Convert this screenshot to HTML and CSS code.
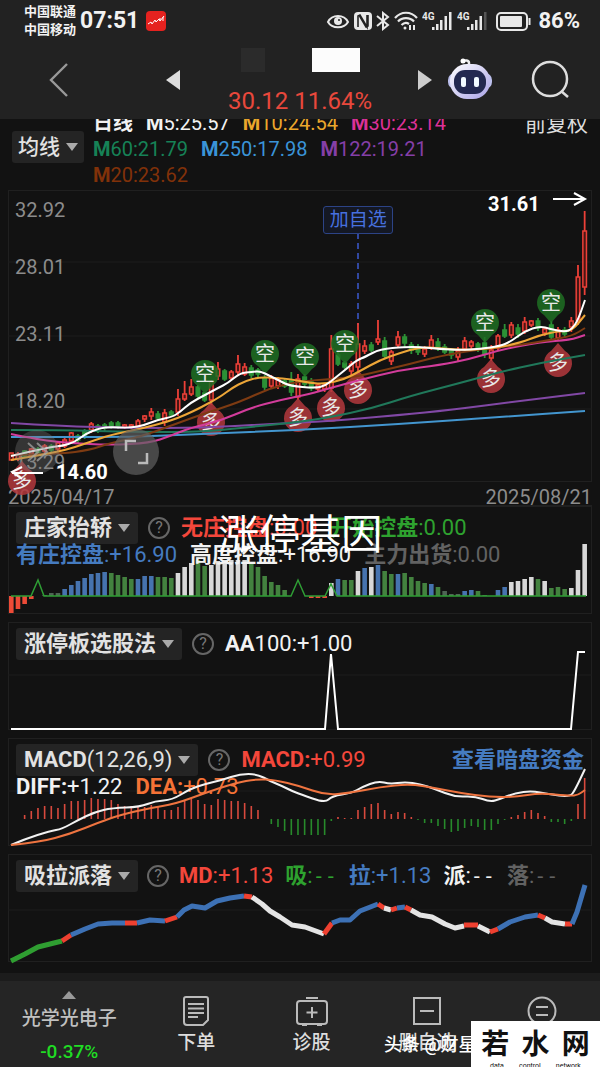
FILE: index.html
```html
<!DOCTYPE html>
<html lang="zh-CN">
<head>
<meta charset="utf-8">
<meta name="viewport" content="width=device-width, initial-scale=1">
<title>行情</title>
<link rel="stylesheet" href="styles.css">
</head>
<body>
<div class="status">
  <div class="carriers"><span>中国联通</span><span>中国移动</span></div>
  <span class="clock">07:51</span>
  <svg class="app-dot" viewBox="0 0 20 20" width="20" height="20"><rect width="20" height="20" rx="4" fill="#e5221f"/><path d="M2 13l3-2 1 2 3-4 1 2 3-3 1 2 4-5M14 7v3M17 6v4" fill="none" stroke="#fff" stroke-width="1"/></svg>
  <div class="status-icons">
    <svg viewBox="0 0 24 20" width="24" height="20" fill="none" stroke="#e8e8e8" stroke-width="2"><path d="M2 11C6 3 18 3 22 11C18 18 6 18 2 11Z"/><circle cx="12" cy="10" r="4" fill="#e8e8e8" stroke="none"/><circle cx="13" cy="9" r="1" fill="#222" stroke="none"/></svg>
    <svg viewBox="0 0 18 20" width="18" height="20"><rect x="0" y="1" width="18" height="18" rx="4" fill="#e8e8e8"/><path d="M4 16V5l2-1 7 12V4M14 4v11l-2 1L5 4" fill="none" stroke="#222" stroke-width="1.6"/></svg>
    <svg viewBox="0 0 14 20" width="14" height="20" fill="none" stroke="#e8e8e8" stroke-width="2"><path d="M1 5l11 9-5 4V2l5 4-11 9"/></svg>
    <svg viewBox="0 0 24 20" width="24" height="20" fill="none" stroke="#e8e8e8" stroke-width="2.2"><path d="M1 7C7 0 17 0 23 7M4 10.500C8 6 16 6 20 10.500M7.500 14C10 11.500 13 11.500 15 13"/><circle cx="11" cy="17" r="1.500" fill="#e8e8e8" stroke="none"/><path d="M16 14v5M20 14v5" stroke-width="2"/></svg>
    <svg viewBox="0 0 31 22" width="31" height="22" fill="#e8e8e8"><text x="0" y="10" class="net">4G</text><path d="M10 17h2.500v3h-2.500zM14 14h2.500v6h-2.500zM18 10h2.500v10h-2.500zM22.500 6h2.500v14h-2.500zM27 2h2.500v18h-2.500z"/></svg>
    <svg viewBox="0 0 31 22" width="31" height="22" fill="#e8e8e8"><text x="0" y="10" class="net">4G</text><path d="M10 17h2.500v3h-2.500zM14 14h2.500v6h-2.500zM18 10h2.500v10h-2.500zM22.500 6h2.500v14h-2.500z"/><path d="M27 2h2.500v18h-2.500z" fill="#555"/></svg>
    <svg class="cell" viewBox="0 0 36 20" width="36" height="20"><rect x="1" y="2" width="30" height="17" rx="4" fill="none" stroke="#e8e8e8" stroke-width="2"/><rect x="4" y="5" width="22" height="11" rx="1" fill="#e8e8e8"/><path d="M33.500 7v7" stroke="#e8e8e8" stroke-width="2"/></svg>
    <span class="battery">86%</span>
  </div>
</div>

<header class="topbar">
  <div class="side side-left">
    <button class="icon-btn" aria-label="返回"><svg viewBox="0 0 22 36" width="22" height="36"><path d="M19 2L3 18l16 16" fill="none" stroke="#999" stroke-width="2.400"/></svg></button>
    <button class="icon-btn" aria-label="上一只"><svg viewBox="0 0 14 20" width="14" height="20"><path d="M14 0v20L0 10z" fill="#ddd"/></svg></button>
  </div>
  <div class="quote">
    <div class="name"><span class="block dark"></span><span class="block light"></span></div>
    <div class="price">30.12 11.64%</div>
  </div>
  <div class="side side-right">
    <button class="icon-btn" aria-label="下一只"><svg viewBox="0 0 14 20" width="14" height="20"><path d="M0 0v20l14-10z" fill="#ccc"/></svg></button>
    <button class="icon-btn robot" aria-label="智能助手"><svg viewBox="0 0 46 44" width="46" height="44"><defs><linearGradient id="shell" x1="0" y1="0" x2="1" y2="1"><stop offset="0" stop-color="#fff"/><stop offset="1" stop-color="#aaa4e8"/></linearGradient></defs><path d="M22 8V5c0-3-4-3-6-2" fill="none" stroke="#eee" stroke-width="2.500"/><circle cx="16" cy="3" r="2.500" fill="#fff"/><rect x="1" y="15" width="44" height="16" rx="7" fill="#bcc0ed"/><rect x="3" y="6" width="40" height="35" rx="17" fill="url(#shell)"/><rect x="7" y="12" width="32" height="24" rx="11" fill="#232950"/><rect x="14" y="19" width="5" height="10" rx="2" fill="#f2fbff"/><rect x="27" y="19" width="5" height="10" rx="2" fill="#f2fbff"/></svg></button>
    <button class="icon-btn" aria-label="搜索"><svg viewBox="0 0 40 40" width="40" height="40" fill="none" stroke="#ddd" stroke-width="2.500"><circle cx="20" cy="19" r="17"/><path d="M31 31l7 6"/></svg></button>
  </div>
</header>

<main class="content">
  <section class="legend">
    <button class="pick pick-ma">均线 <i class="caret"></i></button>
    <div class="ma-rows">
      <div class="row ma"><b>日线</b><span><b>M</b>5:25.57</span><span class="c-yellow"><b>M</b>10:24.54</span><span class="c-pink"><b>M</b>30:23.14</span></div>
      <div class="row ma"><span class="c-teal"><b>M</b>60:21.79</span><span class="c-sky"><b>M</b>250:17.98</span><span class="c-purple"><b>M</b>122:19.21</span></div>
      <div class="row ma"><span class="c-brown"><b>M</b>20:23.62</span></div>
    </div>
    <span class="adjust">前复权</span>
  </section>

  <section class="kline">
    <svg id="kline" class="plot" viewBox="8 190 584 292">
      <path class="grid" d="M8 262H592M8 336H592M8 409H592"/>
      <g class="axis"><text x="15" y="217">32.92</text><text x="15" y="274">28.01</text><text x="15" y="341">23.11</text><text x="15" y="408">18.20</text><text x="15" y="469">13.29</text></g>
      <path d="M358 233V325" stroke="#3c5bd0" stroke-width="1.500" stroke-dasharray="6 4"/>
      <g id="candles"></g>
      <g id="signals"></g>
      <g id="averages" class="line"></g>
      <circle cx="37" cy="452" r="22" fill="#777" opacity=".35"/>
      <path d="M28 443l10 9-10 9M37 443l10 9-10 9" fill="none" stroke="#aaa" stroke-width="2" opacity=".7"/>
      <path d="M553 199H585M574 193l11 6-11 6M43 473H12M22 467l-10 5 10 7" fill="none" stroke="#fff" stroke-width="2"/>
      <text class="mark" x="488" y="211">31.61</text><text class="mark" x="56" y="479">14.60</text>
    </svg>
    <button class="watch">加自选</button>
    <button class="expand" aria-label="全屏"><svg viewBox="0 0 46 46" width="46" height="46" fill="none" stroke="#bbb" stroke-width="2.500"><path d="M13 22V12h10M25 34h9V24"/></svg></button>
  </section>
  <div class="dates"><span>2025/04/17</span><span>2025/08/21</span></div>

  <section class="panel">
    <svg class="plot" viewBox="8 506 584 108"><g id="control"></g><path d="M11 596H31L38 580L44 596H291L298 580L305 596H325L331 584L337 596H586" fill="none" stroke="#2f9e35" stroke-width="1.500"/></svg>
    <div class="head">
      <div class="row"><button class="pick">庄家抬轿 <i class="caret"></i></button><button class="help">?</button><span class="c-red"><b>无庄控盘</b>:0.00</span><span class="c-green"><b>开始控盘</b>:0.00</span></div>
      <div class="row values"><span class="c-blue"><b>有庄控盘</b>:+16.90</span><span><b>高度控盘</b>:+16.90</span><span class="c-gray"><b>主力出货</b>:0.00</span></div>
    </div>
    <div class="caption">涨停基因</div>
  </section>

  <section class="panel">
    <svg class="plot" viewBox="8 622 584 108"><path class="grid" d="M8 675H592"/><path d="M11 729H325L331 654L338 729H571L578 652H585" fill="none" stroke="#fff" stroke-width="2"/></svg>
    <div class="head"><div class="row"><button class="pick">涨停板选股法 <i class="caret"></i></button><button class="help">?</button><span><b>AA</b>100:+1.00</span></div></div>
  </section>

  <section class="panel">
    <svg class="plot" viewBox="8 738 584 108"><path class="grid" d="M8 791H592"/><g id="macd"></g></svg>
    <div class="head">
      <div class="row"><button class="pick"><span><b>MACD</b>(12,26,9)</span> <i class="caret"></i></button><button class="help">?</button><span class="c-red"><b>MACD:</b>+0.99</span><a class="more" href="#funds">查看暗盘资金</a></div>
      <div class="row values"><span><b>DIFF:</b>+1.22</span><span class="c-orange"><b>DEA:</b>+0.73</span></div>
    </div>
    <svg class="plot line front" viewBox="8 738 584 108"><g id="macd-lines"></g></svg>
  </section>

  <section class="panel">
    <svg class="plot" viewBox="8 854 584 108"><path class="grid" d="M8 910H592"/><g id="trend" fill="none" stroke-width="5" stroke-linejoin="round"></g></svg>
    <div class="head"><div class="row tight"><button class="pick">吸拉派落 <i class="caret"></i></button><button class="help">?</button><span class="c-red"><b>MD</b>:+1.13</span><span class="c-green"><b>吸</b>:<span class="dash">--</span></span><span class="c-blue"><b>拉</b>:+1.13</span><span><b>派</b>:<span class="dash">--</span></span><span class="c-gray"><b>落</b>:<span class="dash">--</span></span></div></div>
  </section>
</main>

<nav class="tabbar">
  <button class="tab sector"><svg viewBox="0 0 14 8" width="14" height="8"><path d="M7 0l7 8H0z" fill="#999"/></svg><span>光学光电子</span><strong>-0.37%</strong></button>
  <button class="tab"><svg viewBox="0 0 32 32" width="32" height="32"><path d="M6 2H26q2 0 2 2V25l-5 5H7q-3 0-3-3V4q0-2 2-2zM8 9h16M8 13.500h16M8 18h16M8 22h10"/></svg><span>下单</span></button>
  <button class="tab"><svg viewBox="0 0 32 32" width="32" height="32"><rect x="1" y="6" width="30" height="23" rx="3"/><path d="M10 3h12M16 12v11M10.500 17.500h11M6 30h5M21 30h5"/></svg><span>诊股</span></button>
  <button class="tab"><svg viewBox="0 0 32 32" width="32" height="32"><path d="M3 3h26v26H3zM9 16h14"/></svg><span>删自选</span></button>
  <button class="tab"><svg viewBox="0 0 32 32" width="32" height="32"><circle cx="16" cy="16" r="13.500"/><path d="M10 12h12M10 20h12"/></svg><span>更多</span></button>
  <div class="credit">头条 @财星天下</div>
  <div class="stamp"><div class="stamp-name"><span>若</span><span>水</span><span>网</span></div><div class="stamp-sub"><span>data</span><span>control</span><span>network</span></div></div>
</nav>
<script src="chart.js"></script>
</body>
</html>
```
FILE: styles.css
```css
* { box-sizing: border-box; }
body { margin: 0; background: #131313; color: #f2f2f2; font: 22px/26px Roboto, "Noto Sans CJK SC", sans-serif; overflow-x: hidden; }
button { border: 0; padding: 0; background: none; color: inherit; font: inherit; }
svg { display: block; flex: none; }
b { font-weight: 700; }

.status { display: flex; align-items: center; height: 41px; padding: 0 20px 0 24px; background: #222; }
.carriers { display: flex; flex-direction: column; font-size: 13px; line-height: 18px; font-weight: 700; }
.clock { margin-left: 4px; font-size: 23px; font-weight: 700; }
.app-dot { margin-left: 7px; }
.status-icons { display: flex; align-items: center; gap: 4px; margin-left: auto; }
.net { font: 700 10px Roboto, sans-serif; }
.cell { margin-left: 4px; }
.battery { margin-left: 2px; font-size: 22px; font-weight: 700; }

.topbar { display: grid; grid-template-columns: 1fr 160px 1fr; height: 78px; background: #222; }
.side { display: flex; align-items: center; }
.side-left { justify-content: space-between; padding: 0 40px 0 48px; }
.side-right { padding: 0 30px 0 38px; gap: 15px; }
.robot { margin-right: auto; }
.quote { display: flex; flex-direction: column; align-items: center; padding-top: 7px; gap: 16px; }
.name { display: flex; gap: 47px; }
.block { height: 24px; }
.dark { width: 24px; background: #2b2b2b; }
.light { width: 48px; background: #fcfcfc; }
.price { color: #e8483c; font-size: 24px; white-space: nowrap; }

.content { padding: 0 8px 11px; background: #121212; }
.legend { display: flex; align-items: flex-end; gap: 9px; height: 71px; padding: 0 4px 2px; overflow: hidden; }
.pick { display: flex; align-items: center; gap: 6px; height: 32px; padding: 0 8px; background: #242424; border-radius: 3px; color: #e2e2e2; font-weight: 700; white-space: nowrap; }
.pick span { font-weight: 400; }
.pick-ma { align-self: center; margin-bottom: 14px; padding: 0 6px; font-size: 21px; font-weight: 500; }
.caret { border: 6px solid transparent; border-top: 8px solid #aaa; border-bottom: 0; }
.ma-rows { flex: 1; font-size: 20px; }
.row { display: flex; align-items: center; gap: 13px; white-space: nowrap; }
.tight { gap: 12px; }
.adjust { align-self: flex-start; margin-top: -8px; font-size: 21px; color: #ddd; }

.kline, .panel { position: relative; display: grid; box-shadow: inset 0 0 0 1px #202020; }
.plot { width: 100%; height: auto; grid-area: 1 / 1; overflow: visible; }
.grid { stroke: #1c1c1c; fill: none; }
.axis { font-size: 20px; fill: #8c8c8c; }
.mark { font-size: 20px; font-weight: 700; fill: #fff; }
.line { fill: none; stroke-width: 2; stroke-linejoin: round; }
.signal { font-size: 20px; fill: #e8e8e8; text-anchor: middle; }
.watch { position: absolute; left: 54%; top: 16px; width: 70px; height: 28px; border: 1px solid #2c4386; border-radius: 3px; color: #4770df; background: #141824; font-size: 19px; }
.expand { position: absolute; left: 18%; top: 239px; border-radius: 50%; background: rgb(95 95 95 / .7); }
.dates { display: flex; justify-content: space-between; height: 24px; line-height: 30px; color: #8c8c8c; font-size: 20px; border-bottom: 1px solid #202020; }
.panel + .panel { margin-top: 8px; }
.head { grid-area: 1 / 1; padding: 6px 8px 0; z-index: 1; }
.front { z-index: 2; }
.values { line-height: 22px; }
.help { width: 22px; height: 22px; margin: 0 -2px 0 -3px; border: 2px solid #666; border-radius: 50%; color: #777; font-size: 16px; line-height: 18px; }
.more { margin-left: auto; color: #457bc0; font-weight: 700; text-decoration: none; }
.dash { font-family: "DejaVu Sans Mono", monospace; font-size: 20px; }
.caption { position: absolute; z-index: 3; left: 36%; top: 0; font-size: 41px; line-height: 58px; color: #fff; }

.c-yellow { color: #eba72c; } .c-pink { color: #dc3197; } .c-teal { color: #168257; }
.c-sky { color: #3a94d8; } .c-purple { color: #853fa8; } .c-brown { color: #813109; }
.c-red { color: #f4473b; } .c-green { color: #2ea22f; } .c-blue { color: #457bc0; }
.c-gray { color: #626262; } .c-orange { color: #f57236; }

.tabbar { position: relative; display: grid; grid-template-columns: 6fr 5fr 5fr 5fr 5fr; height: 94px; border-top: 8px solid #1c1c1c; background: #252525; overflow: hidden; }
.tab { display: flex; flex-direction: column; align-items: center; justify-content: flex-start; gap: 3px; padding-top: 14px; color: #ddd; font-size: 19px; font-weight: 500; white-space: nowrap; }
.tab svg { fill: none; stroke: #bbb; stroke-width: 2; }
.sector { padding-top: 10px; gap: 7px; color: #c0c0c0; }
.tab.sector svg { stroke: none; }
.sector strong { color: #20dc24; font-weight: 500; }
.credit { position: absolute; left: 64%; bottom: 10px; font-size: 18px; line-height: 24px; color: #fff; font-weight: 500; white-space: nowrap; }
.stamp { position: absolute; right: 0; bottom: 0; width: 129px; height: 46px; padding: 7px 4px 0; background: #fff; color: #111; }
.stamp-name { display: flex; justify-content: space-around; font-size: 28px; line-height: 34px; font-weight: 700; }
.stamp-sub { display: flex; justify-content: space-evenly; font-size: 7px; line-height: 8px; }
```
FILE: chart.js
```js
const NS = "http://www.w3.org/2000/svg";
const X0 = 11.3, STEP = 6.667;
const xAt = i => X0 + i * STEP;

function add(parent, tag, attrs, text) {
  const el = document.createElementNS(NS, tag);
  for (const k in attrs) el.setAttribute(k, attrs[k]);
  if (text) el.textContent = text;
  parent.appendChild(el);
  return el;
}
const byId = id => document.getElementById(id);

// Smooth path through "x,y x,y ..." points.
function smooth(str) {
  const p = str.split(" ").map(s => s.split(",").map(Number));
  let d = `M${p[0]}`;
  for (let i = 1; i < p.length - 1; i++) {
    d += `Q${p[i]} ${(p[i][0] + p[i + 1][0]) / 2},${(p[i][1] + p[i + 1][1]) / 2}`;
  }
  return d + `L${p[p.length - 1]}`;
}

// Candles: colour, high, body top, body bottom, low.
const candles = `r 453 453 460 460|r 452 454 459 461|g 450 451 456 458|r 448 449 454 456|g 447 449 453 455|r 444 446 451 453|g 444 446 450 452|r 441 443 449 451
r 438 440 446 448|r 432 433 441 444|g 434 436 440 443|g 429 431 436 439|r 422 424 430 433|g 424 426 430 433|g 423 425 428 431|g 421 423 427 429|g 421 423 426 429|r 424 425 427 429
r 424 425 427 429|r 419 421 426 428|r 415 416 419 422|r 408 412 416 420|g 411 414 418 420|r 409 413 422 426|g 410 412 415 417|r 389 399 412 416|r 381 394 399 401|r 379 387 394 396
g 385 387 396 399|g 392 393 400 402|r 380 382 400 405|r 362 369 376 380|g 369 371 379 381|r 370 372 378 380|r 355 364 372 376|r 363 367 374 376|g 365 368 375 378|g 368 370 374 377
g 375 378 387 390|r 375 378 386 389|r 377 379 386 389|g 379 381 386 388|g 372 380 392 396|r 374 379 397 400|g 374 377 384 388|g 378 382 388 391|r 383 385 389 392|r 383 385 389 392
r 335 349 388 392|g 351 355 364 366|g 361 363 367 369|r 361 364 371 375|r 323 344 367 371|r 340 346 351 354|g 342 345 350 352|r 320 339 342 345|g 337 341 356 359|r 350 352 361 365
r 331 337 345 348|g 334 337 343 347|g 342 345 350 354|g 344 347 352 355|r 346 349 354 357|r 335 340 348 350|g 338 342 347 351|g 344 347 352 354|g 348 350 355 359|r 347 351 357 361
r 337 341 349 352|r 340 342 346 349|g 342 344 349 352|g 337 343 354 358|r 345 350 358 361|r 334 336 348 351|g 324 330 336 338|r 322 325 335 338|g 324 328 334 338|r 317 322 331 334
r 320 321 325 327|g 318 321 328 331|r 327 329 333 336|g 321 325 337 340|r 327 330 338 341|g 327 330 334 337|r 317 321 327 332|r 265 277 320 325|r 211 231 287 295`
  .split(/[|\n]/).map(s => s.split(" "));
candles.forEach(([c, high, top, bottom, low], i) => {
  const color = c === "r" ? "#ec4038" : "#2c9136";
  const x = xAt(i), g = byId("candles");
  add(g, "path", { d: `M${x} ${high}V${top}M${x} ${bottom}V${low}`, stroke: color, "stroke-width": 1.8 });
  add(g, "rect", { x: x - 1.8, y: top, width: 3.6, height: bottom - top, stroke: color, "stroke-width": 1.5, fill: c === "r" ? "#4a1613" : color });
});

const averages = [
  ["#4396cf", "11,437 60,437 130,437 200,434 300,430 400,424 500,417 585,411"],
  ["#8148a5", "11,423 60,426 130,428 200,428 270,424 330,421 400,415 450,410 520,401 585,393"],
  ["#20785a", "11,430 60,430 130,432 200,432 240,428 300,422 330,417 370,409 410,396 460,383 500,372 540,363 585,355"],
  ["#d33c9b", "11,434 40,440 70,443 110,445 150,443 170,436 190,428 220,421 250,408 280,400 310,394 330,388 360,380 400,370 440,365 470,359 500,350 540,342 570,340 585,335"],
  ["#7e3b12", "11,455 60,454 90,450 110,443 140,437 170,426 200,415 240,402 270,388 300,381 350,378 380,371 410,364 440,356 480,349 520,345 550,340 572,336 585,328"],
  ["#eda638", "11,460 60,452 90,442 110,435 140,429 170,421 185,415 200,408 220,397 232,388 245,381 260,377 275,378 290,379 310,383 325,384 345,379 360,371 380,360 400,353 420,347 440,348 460,350 490,349 520,343 540,335 560,331 572,331 585,315"],
  ["#ffffff", "11,456 50,447 62,446 75,442 85,434 100,428 111,427 130,428 145,425 157,420 172,417 180,412 190,403 205,395 218,388 228,383 240,373 252,372 260,371 270,376 280,381 290,386 315,388 325,386 335,378 345,370 357,360 365,357 380,349 405,347 420,347 440,349 460,350 480,349 500,346 510,342 525,331 540,326 550,329 565,332 572,329 578,320 585,300"]
];
averages.forEach(([color, pts]) => add(byId("averages"), "path", { d: smooth(pts), stroke: color }));

function signal(x, y, up) {
  const g = add(byId("signals"), "g", {}), s = up ? -1 : 1;
  const color = up ? "#b4383d" : "#1e7023";
  const shape = add(g, "g", { fill: color, opacity: 0.85 });
  add(shape, "path", { d: `M${x} ${y + s * 20}L${x - 7} ${y + s * 12}A14 14 0 1 ${up ? 0 : 1} ${x + 7} ${y + s * 12}Z` });
  add(g, "text", { x, y: y + 7, class: "signal" }, up ? "多" : "空");
}
[[205, 374], [265, 354], [305, 357], [345, 344], [485, 323], [551, 303]].forEach(p => signal(...p, false));
[[211, 422], [298, 418], [331, 408], [358, 390], [491, 379], [558, 363], [22, 481]].forEach(p => signal(...p, true));

// Control histogram: colour key followed by height above the zero line.
const control = "r-17 r-13 r-8 r-3 n0 n1 n3 n3 b7 b11 b15 b18 b22 b23 b24 g23 g21 g19 g17 b17 b20 b20 g19 g19 g18 w23 w29 w33 g36 g30 w31 w35 w36 w36 w36 w36 g33 g29 g20 g14 g11 g6 n0 n0 n0 r-2 r-2 r-2 w13 b17 g16 g16 w25 b28 w29 b31 g25 g22 b22 g23 g19 g15 g13 b12 g9 n5 n2 n2 b5 b6 g5 n1 n0 b6 b9 w14 w15 w17 w19 g17 w15 g8 g9 g7 w8 w26 w52".split(" ");
const tones = { r: "#ee4b37", b: "#4673af", g: "#43823f", w: "#d8d8d8", n: "#4e6554" };
control.forEach((s, i) => {
  const h = Number(s.slice(1));
  add(byId("control"), "rect", { x: xAt(i) - 2.3, y: h > 0 ? 596 - h : 596, width: 4.6, height: Math.abs(h), fill: tones[s[0]] });
});

const macd = [0, 0, 4, 8, 11, 13, 13, 11, 15, 18, 18, 19, 21, 20, 20, 19, 15, 13, 13, 12, 12, 14, 12, 9, 9, 12, 18, 20, 19, 15, 14, 20, 19, 18, 18, 16, 13, 9, 0, -5, -8, -12, -16, -16, -16, -16, -16, -16, -2, 2, 1, 1, 9, 12, 15, 16, 9, 5, 7, 6, 2, -1, -4, -4, -7, -10, -13, -12, -9, -7, -8, -11, -11, -5, -1, 2, 4, 7, 9, 6, 3, -3, -3, -5, -2, 15, 41];
macd.forEach((h, i) => add(byId("macd"), "rect", { x: xAt(i) - 0.8, y: h > 0 ? 819 - h : 819, width: 1.6, height: Math.abs(h), fill: h > 0 ? "#d8493d" : "#278a2b" }));
add(byId("macd-lines"), "path", { stroke: "#f2f2f2", d: smooth("11,845 25,839 50,831 62,829 78,820 95,812 112,808 140,807 155,801 172,800 190,789 205,784 222,780 240,774 257,774 270,781 282,786 292,791 300,794 325,803 332,796 352,793 362,787 378,781 390,784 405,782 420,784 435,789 455,797 475,796 490,802 500,799 515,793 532,791 548,794 570,797 575,790 585,769") });
add(byId("macd-lines"), "path", { stroke: "#ef7440", d: smooth("11,845 40,842 70,834 100,822 120,815 150,808 175,804 205,793 235,783 257,779 275,780 300,786 325,795 350,793 380,787 410,784 435,788 460,793 490,797 515,797 540,793 570,796 578,795 585,790") });

const trend = [
  ["g", "11,961 25,954 38,947 50,944 62,941"], ["r", "62,941 71,935"], ["b", "71,935 85,929 98,924 112,923 125,923"],
  ["r", "125,923 137,923"], ["b", "137,923 150,920 165,921"], ["r", "165,921 177,917"],
  ["b", "177,917 184,910 192,906 205,908 217,901 230,898 244,896"], ["r", "244,896 252,897"],
  ["w", "252,897 262,904 270,911 280,917 292,925 305,927 324,934"], ["r", "324,934 332,923"],
  ["b", "332,923 340,920 350,920 360,911 378,904"], ["r", "378,904 384,908"], ["w", "384,908 391,910"],
  ["r", "391,910 397,908"], ["b", "397,908 405,907"], ["r", "405,907 411,910"],
  ["w", "411,910 420,915 432,917 445,924 455,928 464,926"], ["r", "464,925 478,925"], ["w", "478,926 490,932"],
  ["r", "490,932 498,929"], ["b", "498,929 510,922 525,917 538,915"], ["r", "538,915 545,918"],
  ["w", "545,918 552,922 565,924"], ["r", "565,924 572,924"], ["b", "572,924 577,912 585,885"]
];
const inks = { g: "#2f9e31", r: "#ee4030", b: "#3d71b5", w: "#e4e4e4" };
trend.forEach(([c, pts]) => add(byId("trend"), "polyline", { points: pts, stroke: inks[c] }));
```
